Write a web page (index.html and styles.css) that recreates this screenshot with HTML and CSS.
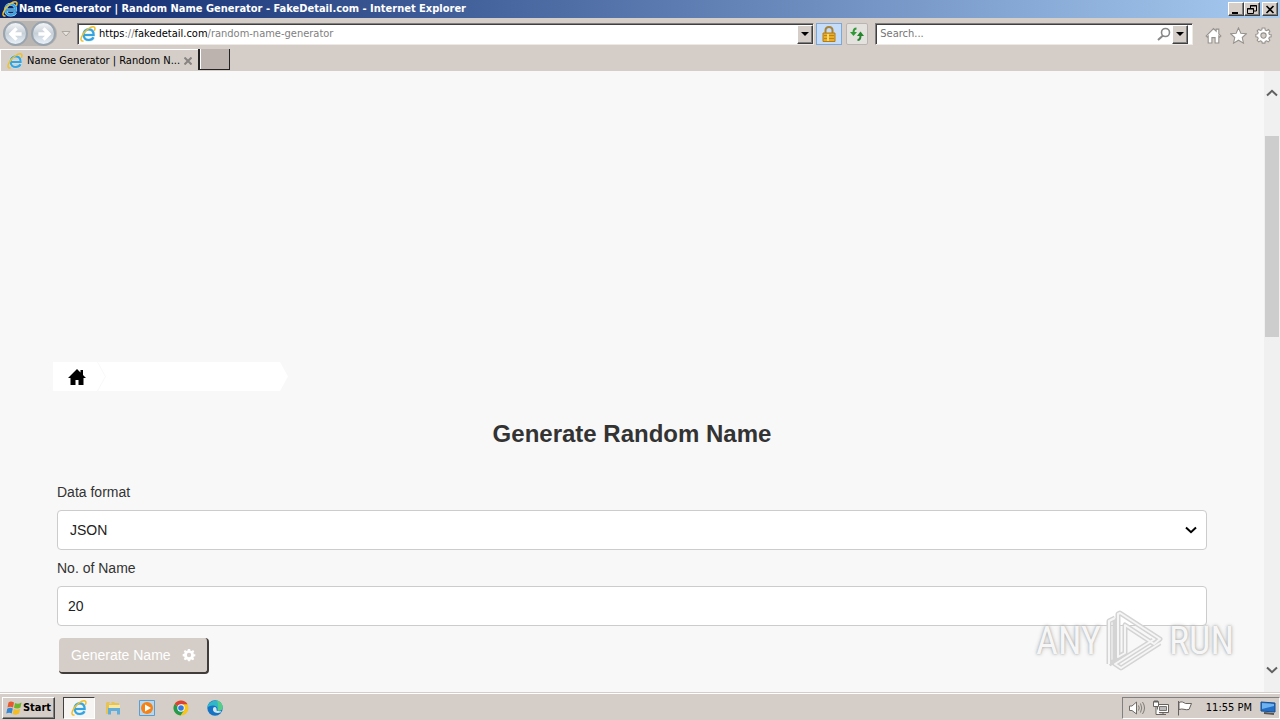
FILE: index.html
```html
<!DOCTYPE html>
<html lang="en">
<head>
    <meta charset="UTF-8">
    <title>Name Generator | Random Name Generator - FakeDetail.com</title>
    <link rel="stylesheet" href="styles.css">
</head>
<body>
<svg class="defs" aria-hidden="true">
    <symbol id="ie" viewBox="0 0 16 16">
        <path d="M4.500 9H13.600C13.800 5.500 11.700 3.300 8.800 3.300C5.800 3.300 3.600 5.500 3.600 8.700C3.600 12 5.900 14 8.800 14C11 14 12.700 13 13.500 11.300" fill="none" stroke="#c4e9fa" stroke-width="3"/>
        <path d="M4.500 9H13.600C13.800 5.500 11.700 3.300 8.800 3.300C5.800 3.300 3.600 5.500 3.600 8.700C3.600 12 5.900 14 8.800 14C11 14 12.700 13 13.500 11.300" fill="none" stroke="#36a3df" stroke-width="2.200"/>
        <path d="M3.500 15C.6 15.600 .2 12.800 2.300 9.300C5 4.500 11 .1 14 1C15.300 1.500 15.200 3.200 14.300 4.800" fill="none" stroke="#efc02a" stroke-width="1.500"/>
    </symbol>
    <symbol id="down" viewBox="0 0 8 4"><path d="M0 0H8L4 4Z"/></symbol>
    <symbol id="chevron" viewBox="0 0 12 8"><path d="M1 1.500L6 6.200L11 1.500" fill="none" stroke="currentColor" stroke-width="2"/></symbol>
    <symbol id="gear" viewBox="0 0 16 16">
        <path fill-rule="evenodd" d="M6.700 1H9.300L9.700 3L11 3.500L12.700 2.400L14 4L13 5.500L13.500 7L15.200 7.200V9.300L13.500 9.700L13 11L14 12.500L12.500 14L11 13L9.600 13.500L9.300 15.200H6.800L6.400 13.500L5 13L3.500 14L2 12.500L3 11L2.500 9.600L.8 9.300V6.900L2.500 6.500L3 5.200L2 3.600L3.500 2.200L5 3.300L6.400 2.800ZM8 5.500A2.500 2.500 0 1 0 8 10.500A2.500 2.500 0 1 0 8 5.500Z"/>
    </symbol>
</svg>

<header class="titlebar">
    <svg class="icon"><use href="#ie"/></svg>
    <span class="caption">Name Generator | Random Name Generator - FakeDetail.com - Internet Explorer</span>
    <div class="winbtns">
        <button aria-label="Minimize"><svg viewBox="0 0 10 9"><path d="M1 7H7V9H1Z"/></svg></button>
        <button aria-label="Restore"><svg viewBox="0 0 10 9"><path d="M3.500 3V.5H9.500V6H7M3 1H10M.5 3.500H6.500V8.500H.5ZM0 4H7" fill="none" stroke="#000"/></svg></button>
        <button class="close" aria-label="Close"><svg viewBox="0 0 10 9"><path d="M1.500 1L8.500 8M8.500 1L1.500 8" stroke="#000" stroke-width="1.600"/></svg></button>
    </div>
</header>

<div class="navbar">
    <div class="history">
        <button aria-label="Back"><svg viewBox="0 0 16 16"><path d="M8.500 3L3.500 8L8.500 13M4 8H13" /></svg></button>
        <button aria-label="Forward"><svg viewBox="0 0 16 16"><path d="M7.500 3L12.500 8L7.500 13M3 8H12"/></svg></button>
    </div>
    <svg class="recent" viewBox="0 0 10 6"><path d="M1 .5H9L5 5Z" fill="#e8e4df" stroke="#aaa6a0"/></svg>
    <div class="address">
        <svg class="icon"><use href="#ie"/></svg>
        <a class="url" href="#">https<i>://</i>fakedetail.com<i>/random-name-generator</i></a>
        <button class="drop" aria-label="Show address list"><svg><use href="#down"/></svg></button>
    </div>
    <button class="tool lock" aria-label="Security report">
        <svg viewBox="0 0 16 18"><path d="M4.500 9V5.500C4.500 .8 11.500 .8 11.500 5.500V9" fill="none" stroke="#a98235" stroke-width="2"/><path d="M2 8H14V16.500H2Z" fill="#e9ad27" stroke="#b67b12"/><path d="M3 10.500H13M3 13.500H13" stroke="#bd8418"/><path d="M7 9V16" stroke="#f8d76b" stroke-width="2"/></svg>
    </button>
    <button class="tool refresh" aria-label="Refresh">
        <svg viewBox="0 0 16 16"><path d="M7.500 2.500C5 2.500 4.500 4 4.500 6.500" fill="none" stroke="#2f9a35" stroke-width="2"/><path d="M1 6H8L4.500 10Z" fill="#2f9a35"/><path d="M8.500 14C11 14 11.500 12 11.500 9.500" fill="none" stroke="#23852b" stroke-width="2"/><path d="M8 10H15L11.500 5.500Z" fill="#23852b"/></svg>
    </button>
    <div class="search">
        <input type="text" placeholder="Search..." aria-label="Search">
        <svg class="glass" viewBox="0 0 14 14"><path d="M6 8.500L1 13" stroke="#888" stroke-width="2"/><circle cx="8.500" cy="5.500" r="4" fill="none" stroke="#888" stroke-width="1.600"/></svg>
        <button class="drop" aria-label="Search options"><svg><use href="#down"/></svg></button>
    </div>
    <div class="commands">
        <svg viewBox="0 0 16 16"><path d="M1 8.500L8 1.500L10.500 4V2H13V6.500L15 8.500L14 9.500L13 8.500V15H9.500V10H6.500V15H3V8.500L2 9.500Z" fill="#fff" stroke="#95918c"/></svg>
        <svg viewBox="0 0 16 16"><path d="M8 .8L10.200 5.800L15.500 6.300L11.500 9.900L12.700 15.200L8 12.400L3.300 15.200L4.500 9.900L.5 6.300L5.800 5.800Z" fill="#fff" stroke="#95918c"/></svg>
        <svg class="settings"><use href="#gear"/></svg>
    </div>
</div>

<div class="tabs">
    <div class="tab">
        <svg class="icon"><use href="#ie"/></svg>
        <span>Name Generator | Random N...</span>
        <button aria-label="Close tab"><svg viewBox="0 0 8 8"><path d="M.5 .5L7.500 7.500M7.500 .5L.5 7.500" stroke="#888480" stroke-width="2"/></svg></button>
    </div>
    <button class="newtab" aria-label="New tab"></button>
</div>

<div class="viewport">
    <main class="page">
        <nav class="breadcrumb" aria-label="Breadcrumb">
            <a class="home" href="#" aria-label="Home"><svg viewBox="0 0 18 16"><path d="M9 0L12.500 3.400V1H15V5.900L18 9H15.500V16H10.500V11H7.500V16H2.500V9H0Z"/></svg></a>
            <span class="crumb"></span>
        </nav>
        <h1>Generate Random Name</h1>
        <form>
            <label for="format">Data format</label>
            <div class="select">
                <select id="format"><option>JSON</option><option>XML</option><option>CSV</option></select>
                <svg><use href="#chevron"/></svg>
            </div>
            <label for="count">No. of Name</label>
            <input class="count" id="count" type="text" value="20">
            <button class="generate" type="button">Generate Name <svg><use href="#gear"/></svg></button>
        </form>
    </main>
    <div class="scrollbar">
        <svg class="up"><use href="#chevron"/></svg>
        <div class="track"><div class="thumb"></div></div>
        <svg><use href="#chevron"/></svg>
    </div>
    <div class="watermark">
        <span>ANY</span>
        <svg viewBox="0 0 60 64"><g fill="none" stroke-linejoin="round"><path d="M4 55V12L10 9M4 55L10 52V9M15 4L55 30L49 35L20 16V44L13 48V5ZM55 34L16 59L10 55L48 31" stroke="#d4d4d4" stroke-width="5"/><path d="M4 55V12L10 9M15 4L55 30L49 35L20 16V44L13 48V5ZM55 34L16 59L10 55L48 31" stroke="#f6f6f6" stroke-width="2"/></g></svg>
        <span>RUN</span>
    </div>
</div>

<footer class="taskbar">
    <button class="start">
        <svg viewBox="0 0 16 16"><path d="M2.500 2.500C4.500 1 6 1.500 8 2.500L7 7.500C5 6.500 3.500 6.500 1.500 7.500Z" fill="#e8592b"/><path d="M9 3C11 4 13 4 15.500 2.500L14.500 7.500C12 9 10 8.500 8 7.800Z" fill="#6fb52c"/><path d="M1.200 8.700C3.500 7.500 5 7.700 6.800 8.600L5.700 13.500C4 12.500 2.500 12.500 .3 13.600Z" fill="#3487d3"/><path d="M7.800 9C10 10 12 10 14.200 8.800L13 13.600C11 15 9 15 6.700 14Z" fill="#f4bd23"/></svg>
        Start
    </button>
    <div class="launch">
        <button class="active" aria-label="Internet Explorer"><svg><use href="#ie"/></svg></button>
        <button aria-label="Explorer"><svg viewBox="0 0 16 16"><path d="M1 3V14H4V4L7 3.500L6 2H2ZM5 2H9L10 3H14V10H4V4Z" fill="#e6c355"/><path d="M4 5H15V9H4Z" fill="#f8e7a1"/><path d="M3 14.500V8H15V14.500H12V11H6V14.500Z" fill="#62aedb"/></svg></button>
        <button aria-label="Media Player"><svg viewBox="0 0 16 16"><path d="M.5 .5H15.500V15.500H.5Z" fill="#b5d7ef" stroke="#5f9bcb"/><circle cx="8" cy="8" r="6" fill="#f58216"/><path d="M6 4.500L12 8L6 11.500Z" fill="#fff"/></svg></button>
        <button aria-label="Chrome"><svg viewBox="0 0 16 16"><circle cx="8" cy="8" r="7.500" fill="#f7c51e"/><path d="M8 8L1.500 4.200A7.500 7.500 0 0 1 14.500 4.200H8Z" fill="#dc4236"/><path d="M8 8L1.500 4.200A7.500 7.500 0 0 0 7.500 15.500L11.300 9.900Z" fill="#269a50"/><circle cx="8" cy="8" r="3.700" fill="#fff"/><circle cx="8" cy="8" r="2.800" fill="#3678dc"/></svg></button>
        <button aria-label="Edge"><svg viewBox="0 0 16 16"><circle cx="8" cy="8" r="7.700" fill="#1473c5"/><path d="M.3 8C.5-.5 15-2.500 15.700 7.500C15.700 10 13.500 11 10.500 10.600C11.200 7.500 9 5.500 6 5.500C3 5.500 1 6.500 .3 8Z" fill="#31b8c8"/><path d="M10 .6C14 1.500 16 5 15.600 8C15 10.500 12.500 11 10.500 10.600C12 7 11 4 10 .6Z" fill="#55cf87"/><path d="M6.500 7.500C4.500 11 8 14 13.500 12.500C16 10.500 12 11.700 10 10.800C9 10 10 9.500 9.500 8.500C9 7 7.500 6.500 6.500 7.500Z" fill="#d5e5ee"/></svg></button>
    </div>
    <div class="tray">
        <svg viewBox="0 0 18 16"><path d="M1.500 6H4L8.500 2V14L4 10.500H1.500Z" fill="#fff" stroke="#6f6b66"/><path d="M10.500 5.500Q12 8 10.500 10.500M12.500 3.500Q15 8 12.500 12.500M14.500 2Q18.500 8 14.500 14" fill="none" stroke="#7f7b76"/></svg>
        <svg viewBox="0 0 18 16"><path d="M5.500 4.500H16.500V12.500H5.500ZM8 14.500H14M11 12.500V14.500" fill="#fff" stroke="#66625e"/><path d="M7.500 6.500H14.500V10.500H7.500Z" fill="#bbb" stroke="#77736e"/><path d="M1.500 1.500H6.500V6.500H1.500ZM4 6.500V14.500H8M3 0V3M5 0V3" fill="#fff" stroke="#66625e"/></svg>
        <svg viewBox="0 0 18 16"><path d="M2.500 1V15.500M3 2.500C6 1 7.500 2.500 9.500 3.500H15.500L13 9.500C9 10.500 7 8 3 9.500Z" fill="#fff" stroke="#66625e"/></svg>
        <time>11:55 PM</time>
        <svg viewBox="0 0 18 16"><path d="M2 2L16 3V12L2 11Z" fill="#236fc5" stroke="#174f91"/><path d="M3 3L15 4V6L3 9Z" fill="#6eb2ef"/><path d="M5 13L15 14" stroke="#555" stroke-width="2"/></svg>
    </div>
</footer>
</body>
</html>
```
FILE: styles.css
```css
*{
    box-sizing: border-box;
}
body{
    margin: 0;
    min-height: 100vh;
    display: flex;
    flex-direction: column;
    background: #d5cec8;
    font: 11px/14px "DejaVu Sans Condensed", "DejaVu Sans", sans-serif;
    color: #000;
}
button{
    padding: 0;
    font: inherit;
    color: inherit;
    display: flex;
    align-items: center;
    justify-content: center;
}
svg{
    display: block;
    flex: none;
}
.defs{
    position: absolute;
    width: 0;
    height: 0;
}
.icon{
    width: 16px;
    height: 16px;
}

/* title bar */
.titlebar{
    height: 18px;
    display: flex;
    align-items: center;
    gap: 1px;
    padding: 0 2px;
    background: linear-gradient(to right, #0a246a, #a6caf0);
    color: #fff;
    font-weight: bold;
}
.caption{
    flex: 1;
    white-space: nowrap;
    overflow: hidden;
}
.winbtns{
    display: flex;
}
.winbtns button,
.drop,
.start{
    background: #d5cec8;
    border: 1px solid;
    border-color: #fff #404040 #404040 #fff;
    box-shadow: inset -1px -1px #808080;
}
.winbtns button{
    width: 16px;
    height: 14px;
}
.winbtns svg{
    width: 10px;
    height: 9px;
}
.winbtns .close{
    margin-left: 2px;
}

/* address bar */
.navbar{
    height: 31px;
    display: flex;
    align-items: center;
    padding: 0 8px 0 3px;
}
.history{
    display: flex;
    gap: 3px;
    padding-right: 1px;
    border-radius: 13px;
    background: #b9b5b2;
}
.history button{
    width: 25px;
    height: 25px;
    border: 2px solid #9aa4ae;
    border-radius: 50%;
    background: linear-gradient(#f4f6f8, #c6ced6 50%, #e8f2fa);
}
.history svg{
    width: 18px;
    height: 18px;
    fill: none;
    stroke: #fff;
    stroke-width: 3;
}
.recent{
    width: 10px;
    height: 6px;
    margin: 0 6px 0 4px;
}
.address,
.search{
    height: 22px;
    display: flex;
    align-items: center;
    background: #fff;
    border: 1px solid;
    border-color: #808080 #eee9e4 #eee9e4 #808080;
    box-shadow: inset 1px 1px #404040;
}
.address{
    flex: 734;
    gap: 3px;
    padding: 1px 0 0 2px;
}
.url{
    flex: 1;
    color: #000;
    text-decoration: none;
}
.url i{
    font-style: normal;
    color: #808080;
}
.drop{
    width: 16px;
    height: 19px;
}
.drop svg{
    width: 8px;
    height: 4px;
}
.tool{
    height: 22px;
    border: 1px solid #b9b5b0;
    background: #e4e2df;
}
.lock{
    width: 26px;
    margin: 0 4px 0 2px;
    border-color: #7da7d9;
    background: #c5ddf8;
}
.lock svg{
    width: 16px;
    height: 18px;
}
.refresh{
    width: 22px;
    margin-right: 7px;
    border-radius: 2px;
}
.refresh svg{
    width: 16px;
    height: 16px;
}
.search{
    flex: 308;
    padding: 1px 4px 0 4px;
}
.search input{
    flex: 1;
    min-width: 0;
    padding: 0;
    border: 0;
    outline: 0;
    background: none;
    font: inherit;
}
.search input::placeholder{
    color: #757575;
}
.glass{
    width: 14px;
    height: 14px;
    margin-right: 1px;
}
.commands{
    display: flex;
    gap: 8px;
    padding: 3px 0 0 12px;
}
.commands svg{
    width: 17px;
    height: 17px;
}
.settings{
    fill: #fff;
    stroke: #95918c;
}

/* tabs */
.tabs{
    height: 22px;
    display: flex;
}
.tab{
    width: 198px;
    display: flex;
    align-items: center;
    gap: 4px;
    padding: 0 6px;
    border-left: 1px solid #fff;
    border-top: 1px solid #fff;
}
.tab span{
    flex: 1;
    white-space: nowrap;
}
.tab button{
    width: 8px;
    height: 8px;
    border: 0;
    background: none;
}
.tab button svg{
    width: 8px;
    height: 8px;
}
.newtab{
    width: 32px;
    height: 21px;
    background: #bcb3ae;
    border: 1px solid #222;
    border-width: 0 1px 1px 2px;
    box-shadow: inset 1px 0 #fff;
}

/* page area */
.viewport{
    position: relative;
    flex: 1;
    display: flex;
    background: #f8f8f8;
}
.page{
    flex: 1;
    padding: 291px 57px 18px;
    font: 14px/20px "Liberation Sans", Arial, sans-serif;
    color: #333;
}
.breadcrumb{
    display: flex;
    height: 29px;
    margin-left: -4px;
}
.home,
.crumb{
    background: #fff;
    clip-path: polygon(0 0, calc(100% - 8px) 0, 100% 50%, calc(100% - 8px) 100%, 0 100%);
}
.home{
    width: 52px;
    padding: 7px 0 0 15px;
}
.home svg{
    width: 18px;
    height: 16px;
}
.crumb{
    width: 190px;
    margin-left: -7px;
    clip-path: polygon(0 0, calc(100% - 8px) 0, 100% 50%, calc(100% - 8px) 100%, 0 100%, 8px 50%);
}
h1{
    margin: 28px 0 33px;
    font-size: 24px;
    line-height: 30px;
    text-align: center;
}
form{
    display: flex;
    flex-direction: column;
}
form label{
    margin-bottom: 8px;
}
.select{
    position: relative;
    margin-bottom: 8px;
}
.select select,
.count{
    width: 100%;
    height: 40px;
    border: 1px solid #ccc;
    border-radius: 4px;
    background: #fff;
    font: inherit;
    color: #222;
}
.select select{
    display: block;
    padding: 0 12px;
    appearance: none;
}
.select svg{
    position: absolute;
    right: 10px;
    top: 16px;
    width: 12px;
    height: 8px;
    color: #000;
}
.count{
    padding: 0 10px;
    margin-bottom: 12px;
}
.generate{
    align-self: flex-start;
    gap: 11px;
    height: 36px;
    margin-left: 2px;
    padding: 0 11px 0 12px;
    border: 0 solid #403c3a;
    border-width: 0 2px 2px 0;
    border-radius: 4px;
    background: #d5cec8;
    color: #fff;
}
.generate svg{
    width: 14px;
    height: 14px;
    fill: #fff;
}
.scrollbar{
    width: 16px;
    display: flex;
    flex-direction: column;
    align-items: center;
    gap: 12px;
    padding: 18px 0;
    background: #f0f0f0;
    color: #606060;
}
.scrollbar svg{
    width: 12px;
    height: 8px;
}
.scrollbar .up{
    transform: rotate(180deg);
}
.track{
    flex: 1;
    align-self: stretch;
    padding: 27px 1px 0;
}
.thumb{
    height: 201px;
    background: #cdcdcd;
}
.watermark{
    position: absolute;
    right: 46px;
    bottom: 19px;
    display: flex;
    align-items: center;
    gap: 4px;
    font: 38px/64px "Liberation Sans Narrow", "Roboto Condensed", "Liberation Sans", sans-serif;
    color: #f6f6f6;
    text-shadow: 0 0 2px #aaa, 0 0 4px #bbb;
}
.watermark svg{
    width: 60px;
    height: 64px;
}

/* taskbar */
.taskbar{
    height: 28px;
    display: flex;
    align-items: center;
    padding: 2px 0 0 2px;
    border-top: 1px solid #d5cec8;
    box-shadow: inset 0 1px #fff;
}
.start{
    width: 53px;
    height: 22px;
    gap: 1px;
    font-weight: bold;
}
.start svg{
    width: 16px;
    height: 16px;
}
.launch{
    flex: 1;
    display: flex;
    gap: 2px;
    padding-left: 8px;
}
.launch button{
    width: 32px;
    height: 22px;
    border: 0;
    background: none;
}
.launch .active{
    border: 1px solid;
    border-color: #404040 #fff #fff #404040;
    background: #f7f5f3;
}
.launch svg{
    width: 16px;
    height: 16px;
}
.tray{
    height: 22px;
    display: flex;
    align-items: center;
    gap: 6px;
    padding: 0 2px 0 5px;
    border: 1px solid;
    border-color: #808080 #fff #fff #808080;
}
.tray svg{
    width: 18px;
    height: 16px;
}
.tray time{
    padding: 0 1px 0 6px;
}
```
